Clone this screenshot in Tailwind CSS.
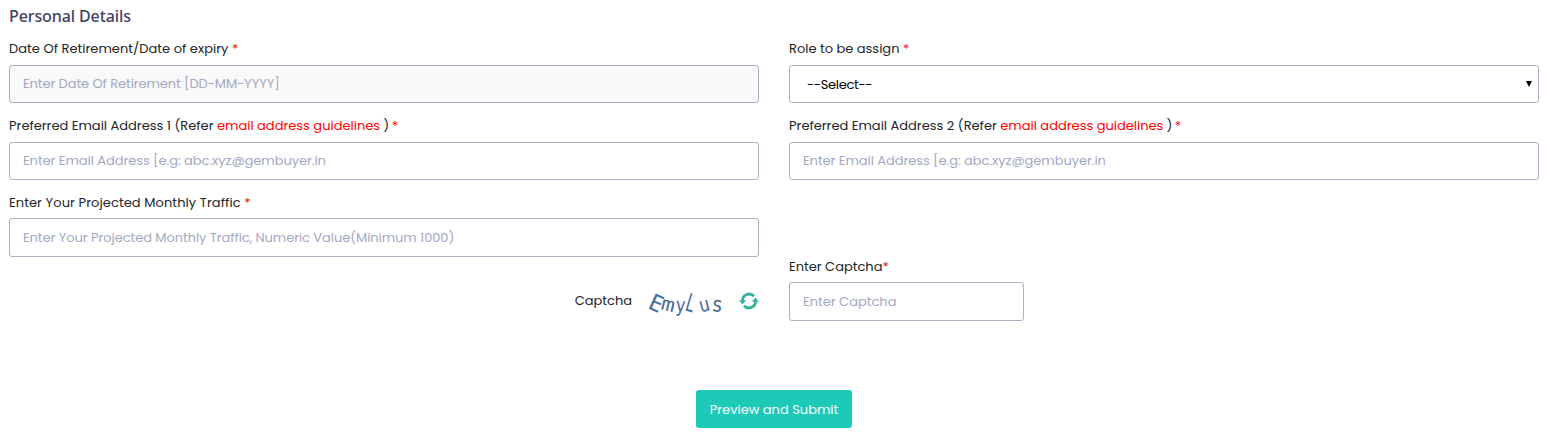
<!DOCTYPE html>
<html lang="en">
<head>
<meta charset="utf-8">
<title>Personal Details</title>
<script src="https://cdn.jsdelivr.net/npm/@tailwindcss/browser@4"></script>
</head>
<body class="bg-white h-[432px] overflow-hidden font-['Poppins','Inter',sans-serif] text-[13px] text-[#212529]">
<form class="flex flex-col px-[9px] pt-1 w-[1548px]">
  <h2 class="h-6 leading-6 text-base font-medium font-['Noto_Sans',sans-serif] text-[#3f4266]"><span class="tracking-[-0.1px]">Personal Details</span></h2>

  <div class="mt-[11px] grid grid-cols-2 gap-x-[30px] gap-y-[13px]">
    <div class="flex flex-col gap-2">
      <label class="h-[18px] leading-5 whitespace-pre"><span class="tracking-[0.03px]">Date Of Retirement/Date of expiry</span> <span class="text-[#ff1111]">*</span></label>
      <input disabled class="h-[38px] w-full rounded-[3px] border border-[#afb0c5] bg-[#f9f9f9] px-[13px] tracking-[-0.08px] placeholder:text-[#a2a8c3]" placeholder="Enter Date Of Retirement [DD-MM-YYYY]">
    </div>
    <div class="flex flex-col gap-2">
      <label class="h-[18px] leading-5 whitespace-pre"><span>Role to be assign</span> <span class="text-[#ff1111]">*</span></label>
      <div class="relative">
        <select class="block h-[38px] w-full appearance-none rounded-[3px] border border-[#afb0c5] bg-white px-[17px] pt-[2px] tracking-[-0.3px] text-black"><option>--Select--</option></select>
        <svg class="absolute right-[7px] top-4 w-[6px] h-[6px]" viewBox="0 0 6 6"><path d="M0 0h6L3 6z" fill="#000"/></svg>
      </div>
    </div>
    <div class="flex flex-col gap-2">
      <label class="h-[18px] leading-5 whitespace-pre"><span>Preferred Email Address 1 (Refer <a class="text-[#ff0000]">email address guidelines</a><span class="tracking-[-0.4px]"> ) </span></span><span class="text-[#ff1111]">*</span></label>
      <input class="h-[38px] w-full rounded-[3px] border border-[#afb0c5] bg-white px-[13px] tracking-[-0.05px] placeholder:text-[#a2a8c3]" placeholder="Enter Email Address [e.g: abc.xyz@gembuyer.in">
    </div>
    <div class="flex flex-col gap-2">
      <label class="h-[18px] leading-5 whitespace-pre"><span>Preferred Email Address 2 (Refer <a class="text-[#ff0000]">email address guidelines</a><span class="tracking-[-0.5px]"> ) </span></span><span class="text-[#ff1111]">*</span></label>
      <input class="h-[38px] w-full rounded-[3px] border border-[#afb0c5] bg-white px-[13px] tracking-[-0.05px] placeholder:text-[#a2a8c3]" placeholder="Enter Email Address [e.g: abc.xyz@gembuyer.in">
    </div>
    <div class="flex flex-col gap-[7px]">
      <label class="h-[18px] leading-5 whitespace-pre"><span class="tracking-[0.08px]">Enter Your Projected Monthly Traffic</span> <span class="text-[#ff1111]">*</span></label>
      <input class="h-[39px] w-full rounded-[3px] border border-[#afb0c5] bg-white px-[13px] tracking-[-0.06px] placeholder:text-[#a2a8c3]" placeholder="Enter Your Projected Monthly Traffic, Numeric Value(Minimum 1000)">
    </div>
  </div>

  <div class="grid grid-cols-2 gap-x-[30px]">
    <div class="flex h-[64px] items-start justify-end pt-[25px]">
      <span class="mt-[9px] leading-5">Captcha</span>
      <svg class="ml-3 w-[84px] h-[38px] font-['DejaVu_Sans_Mono',monospace]" viewBox="644 282 84 38" fill="#4a6c9b">
        <text font-size="23" transform="translate(647 308) rotate(24) scale(.95 1)">E</text>
        <text font-size="19" transform="translate(660 309) rotate(14) scale(1.2 1)">m</text>
        <text font-size="20" transform="translate(675 311.5) rotate(4) scale(.85 1)">y</text>
        <text font-size="25" transform="translate(684 310) rotate(17) scale(.6 1)">L</text>
        <text font-size="20" transform="translate(700.5 312.5) rotate(-14) scale(.9 1)">u</text>
        <text font-size="21" transform="translate(711 311) rotate(6) scale(.9 1)">s</text>
      </svg>
      <svg class="ml-[11px] mt-[9px] w-5 h-[20px]" viewBox="0 0 20 20" fill="none" stroke="#35b39c" stroke-width="2.8">
        <path d="M3.5 10A6.6 6.6 0 0 1 15 5.3M16.5 10A6.6 6.6 0 0 1 5 14.7"/>
        <path d="M0 9.3h7.2L3.5 13.6zM20 10.7h-7.2L16.5 6.4z" fill="#35b39c" stroke="none"/>
      </svg>
    </div>
    <div class="flex flex-col gap-[7px]">
      <label class="h-[18px] leading-5"><span>Enter Captcha</span><span class="text-[#ff1111]">*</span></label>
      <input class="h-[39px] w-[235px] rounded-[3px] border border-[#afb0c5] bg-white px-[13px] placeholder:text-[#a2a8c3]" placeholder="Enter Captcha">
    </div>
  </div>

  <button type="button" class="mt-[69px] h-[38px] w-[156px] self-center rounded-[3px] bg-[#1dc9b7] pt-[2px] text-white"><span>Preview and Submit</span></button>
</form>
</body>
</html>
